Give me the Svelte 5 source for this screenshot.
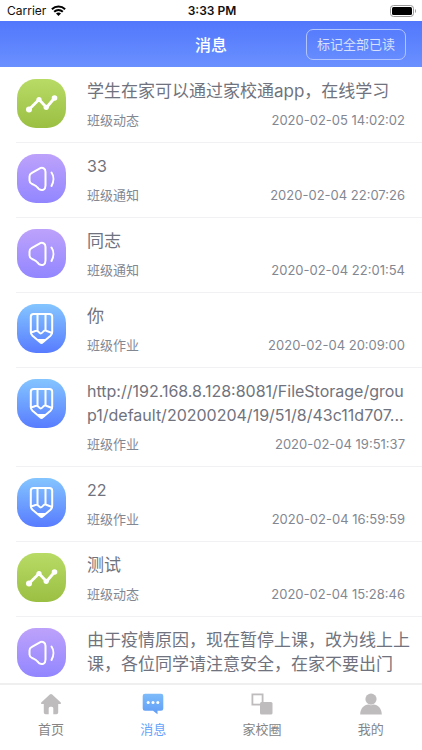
<script lang="ts">
    type Kind = "news" | "notice" | "homework";

    interface Message {
        kind: Kind;
        title: string;
        time?: string;
    }

    const kindLabels: Record<Kind, string> = {
        news: "班级动态",
        notice: "班级通知",
        homework: "班级作业",
    };

    const messages: Message[] = [
        { kind: "news", title: "学生在家可以通过家校通app，在线学习", time: "2020-02-05 14:02:02" },
        { kind: "notice", title: "33", time: "2020-02-04 22:07:26" },
        { kind: "notice", title: "同志", time: "2020-02-04 22:01:54" },
        { kind: "homework", title: "你", time: "2020-02-04 20:09:00" },
        {
            kind: "homework",
            title: "http://192.168.8.128:8081/FileStorage/group1/default/20200204/19/51/8/43c11d707...",
            time: "2020-02-04 19:51:37",
        },
        { kind: "homework", title: "22", time: "2020-02-04 16:59:59" },
        { kind: "news", title: "测试", time: "2020-02-04 15:28:46" },
        {
            kind: "notice",
            title: "由于疫情原因，现在暂停上课，改为线上上课，各位同学请注意安全，在家不要出门",
        },
    ];

    const tabs = [
        { id: "home", label: "首页" },
        { id: "messages", label: "消息" },
        { id: "circle", label: "家校圈" },
        { id: "me", label: "我的" },
    ];

    let active = $state("messages");

    // Latin letters look larger than Chinese ones at the same size
    function isLatin(text: string) {
        return /^[\x20-\x7e]+$/.test(text);
    }
</script>

<div class="app">
    <div class="status-bar">
        <div class="carrier">
            <span>Carrier</span>
            <svg width="15" height="11" viewBox="0 0 15 11" aria-hidden="true">
                <g fill="none" stroke="#000" stroke-width="2">
                    <path d="M0.9 4.3C4.6 0.7 10.4 0.7 14.1 4.3" />
                    <path d="M3.2 6.7C5.6 4.3 9.4 4.3 11.8 6.7" />
                </g>
                <path d="M7.5 11L5 8.5C6.4 7.2 8.6 7.2 10 8.5Z" />
            </svg>
        </div>
        <span class="clock">3:33 PM</span>
        <svg class="battery" width="27" height="12" viewBox="0 0 27 12" aria-hidden="true">
            <rect x="0.5" y="0.5" width="23" height="11" rx="3" fill="none" stroke="#999" />
            <rect x="2" y="2" width="20" height="8" rx="1.5" />
            <path d="M25 4C26.4 4.5 26.4 7.5 25 8Z" fill="#999" />
        </svg>
    </div>

    <header class="header">
        <h1>消息</h1>
        <button type="button" class="read-all">标记全部已读</button>
    </header>

    <ul class="messages">
        {#each messages as message}
            <li class="message">
                <div class="icon {message.kind}">
                    <svg width="49" height="49" viewBox="0 0 49 49" aria-hidden="true">
                        {#if message.kind === "news"}
                            <path class="line thick" d="M12 30.5L22 20.5L29.5 28.5L37.5 19" />
                            <circle cx="12" cy="30.5" r="3" />
                            <circle cx="22" cy="20.5" r="2.6" />
                            <circle cx="29.2" cy="28.3" r="2.6" />
                            <circle cx="37.5" cy="19" r="2.8" />
                        {:else if message.kind === "notice"}
                            <path
                                class="line"
                                d="M14.5 19.2L22 14.8C25.5 12.8 28.5 14.2 28.5 18V31.5C28.5 35.5 25.5 37.3 22 35.2L20.5 33.5C19 31.5 17.5 31.2 15 30C13.2 29 12.5 28 12.5 26.5V22.5C12.5 21 13 20 14.5 19.2Z"
                            />
                            <path class="line" d="M34.5 18.5C37 22 37 27.5 34.5 32" />
                        {:else}
                            <path
                                class="line"
                                d="M16.5 10H32.5C34.2 10 35.2 11 35.2 12.7V28C35.2 29.7 34.7 30.7 33.5 31.8L25.8 38.3C25 39 24 39 23.2 38.3L15.5 31.8C14.3 30.7 13.8 29.7 13.8 28V12.7C13.8 11 14.8 10 16.5 10Z"
                            />
                            <path class="line" d="M20.5 10V26.5M28.5 10V26.5M14 28.5L17 27.5C19 26.5 20.5 26.5 21.5 27.8C23 30 24.5 29.8 25.8 28C27 26.2 29 26.3 30.5 27.3L35 29" />
                            <path d="M20.5 35H28.5L25.8 38.5C25 39.3 24 39.3 23.2 38.5Z" />
                        {/if}
                    </svg>
                </div>
                <div class="body">
                    <p class="title" class:latin={isLatin(message.title)}>{message.title}</p>
                    {#if message.time}
                        <div class="meta">
                            <span>{kindLabels[message.kind]}</span>
                            <time>{message.time}</time>
                        </div>
                    {/if}
                </div>
            </li>
        {/each}
    </ul>

    <nav class="tabs">
        {#each tabs as tab}
            <button
                type="button"
                class="tab"
                class:active={active === tab.id}
                onclick={() => (active = tab.id)}
            >
                <svg width="22" height="22" viewBox="0 0 22 22" aria-hidden="true">
                    {#if tab.id === "home"}
                        <path d="M9.8 1.6Q11 0.6 12.2 1.6L20.8 9.5Q21.6 11 20 11H18.2V19.5Q18.2 21.3 16.4 21.3H13.3V15.2Q13.3 13.7 11.8 13.7H10.2Q8.7 13.7 8.7 15.2V21.3H5.6Q3.8 21.3 3.8 19.5V11H2Q0.4 11 1.2 9.5Z" />
                    {:else if tab.id === "messages"}
                        <defs>
                            <linearGradient id="bubble" x1="0" y1="0" x2="0" y2="1">
                                <stop offset="0" stop-color="#7dbbfb" />
                                <stop offset="1" stop-color="#619df5" />
                            </linearGradient>
                        </defs>
                        <path class="bubble" d="M3 0.8H19Q21.3 0.8 21.3 3V15.5Q21.3 17.8 19 17.8H15.5V21.2L11 17.8H3Q0.7 17.8 0.7 15.5V3Q0.7 0.8 3 0.8Z" />
                        <g fill="#fff">
                            <circle cx="6.2" cy="9.5" r="1.5" />
                            <circle cx="11" cy="9.5" r="1.5" />
                            <circle cx="15.8" cy="9.5" r="1.5" />
                        </g>
                    {:else if tab.id === "circle"}
                        <rect x="1.4" y="1.4" width="10.2" height="10.2" fill="none" stroke="#bfbcbe" stroke-width="1.8" />
                        <rect x="9" y="9" width="12.5" height="12.5" rx="1.5" />
                    {:else}
                        <circle cx="11" cy="6.1" r="5.6" />
                        <path d="M0.2 21.5C0.2 15.5 4 11.8 8.5 11.5Q11 12.8 13.5 11.5C18 11.8 21.8 15.5 21.8 21.5Z" />
                    {/if}
                </svg>
                <span>{tab.label}</span>
            </button>
        {/each}
    </nav>
</div>

<style>
    :global(body) {
        margin: 0;
        background: #fff;
    }

    .app {
        display: flex;
        flex-direction: column;
        height: 100vh;
        font-family: Inter, "Noto Sans CJK SC", sans-serif;
        font-size: 13px;
        color: #838792;
    }

    .status-bar {
        display: grid;
        grid-template-columns: 1fr auto 1fr;
        align-items: center;
        flex: none;
        height: 21px;
        padding: 0 5px 0 7px;
        font-size: 12px;
        color: #111;
    }

    .carrier {
        display: flex;
        align-items: center;
        gap: 5px;
    }

    .clock {
        font-weight: 600;
    }

    .battery {
        justify-self: end;
    }

    .header {
        display: grid;
        grid-template-columns: 1fr auto 1fr;
        align-items: center;
        flex: none;
        height: 46px;
        padding: 0 16px;
        background: linear-gradient(#5377fc, #6a90ff);
    }

    h1 {
        grid-column: 2;
        margin: 0;
        font-size: 16px;
        font-weight: 500;
        color: #fff;
    }

    .read-all {
        justify-self: end;
        height: 31px;
        padding: 0 10px;
        border: 1px solid #b3c5ff;
        border-radius: 7px;
        background: none;
        font: inherit;
        line-height: 20px;
        color: #d7e0ff;
        white-space: nowrap;
        cursor: pointer;
    }

    .messages {
        flex: 1;
        min-height: 0;
        margin: 0;
        padding: 1px 0 0;
        overflow-y: auto;
        scrollbar-width: none;
        list-style: none;
    }

    .message {
        display: flex;
        gap: 21px;
        margin-left: 16px;
        padding: 11px 11px 12px 1px;
        border-bottom: 1px solid #f1f1f4;
    }

    .icon {
        flex: none;
        width: 49px;
        height: 49px;
        border-radius: 19px;
    }

    .icon svg {
        display: block;
        fill: #fff;
    }

    .icon.news {
        background: linear-gradient(#b8db66, #9abf42);
    }

    .icon.notice {
        background: linear-gradient(#bda2fb, #9286ff);
    }

    .icon.homework {
        background: linear-gradient(#84c5ff, #587cff);
    }

    .line {
        fill: none;
        stroke: #fff;
        stroke-width: 2;
        stroke-linecap: round;
        stroke-linejoin: round;
    }

    .thick {
        stroke-width: 2.8;
    }

    .body {
        flex: 1;
        min-width: 0;
    }

    .title {
        margin: 0 0 7px;
        font-size: 17px;
        line-height: 24px;
        color: #70737d;
        word-break: break-all;
    }

    .title.latin {
        font-size: 16px;
    }

    .meta {
        display: flex;
        justify-content: space-between;
        padding-right: 6px;
        line-height: 20px;
    }

    .tabs {
        display: flex;
        justify-content: space-around;
        flex: none;
        padding: 8px 0 11px;
        border-top: 2px solid #efeff0;
        background: #fff;
    }

    .tab {
        display: flex;
        flex-direction: column;
        align-items: center;
        gap: 4px;
        padding: 0;
        border: 0;
        background: none;
        font: inherit;
        line-height: 20px;
        color: #858585;
        cursor: pointer;
    }

    .tab svg {
        fill: #bfbcbe;
    }

    .tab .bubble {
        fill: url(#bubble);
    }

    .tab.active {
        color: #64a4fa;
    }
</style>
